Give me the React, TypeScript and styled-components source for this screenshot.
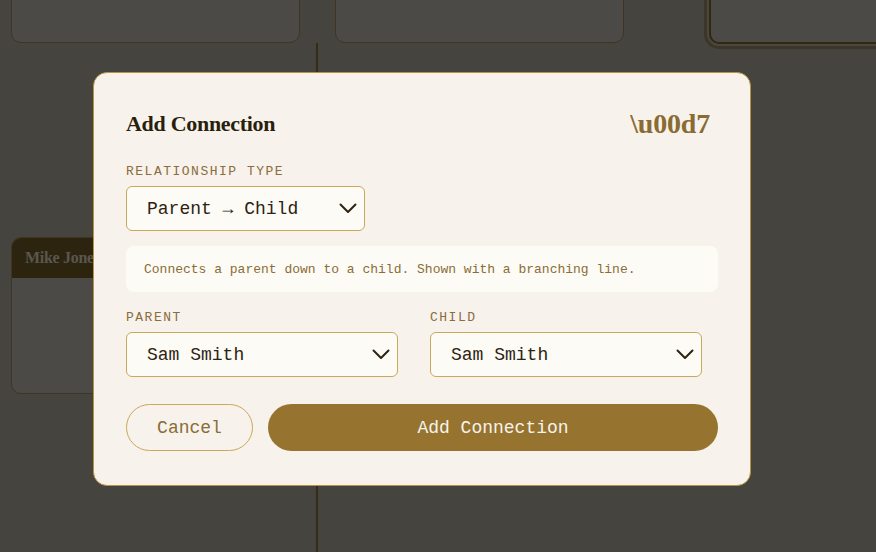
import React from "react";
import styled, { createGlobalStyle } from "styled-components";

const Global = createGlobalStyle`
  html, body { margin: 0; padding: 0; }
  body {
    width: 876px;
    height: 552px;
    overflow: hidden;
    background: #46443e;
    font-family: "Liberation Mono", "DejaVu Sans Mono", monospace;
  }
  * { box-sizing: border-box; }
`;

const Canvas = styled.div`
  position: relative;
  width: 876px;
  height: 552px;
  overflow: hidden;
  background: #46443e;
`;

const Node = styled.div<{ $selected?: boolean }>`
  position: absolute;
  background: #4b4a47;
  border: ${(p) => (p.$selected ? "2px solid #30290f" : "1px solid #3e3524")};
  border-radius: 10px;
  box-shadow: ${(p) =>
    p.$selected ? "0 0 0 2px #4a4740, 0 0 0 5px #3c3629" : "none"};
  overflow: hidden;
  display: flex;
  flex-direction: column;
`;

const NodeHeader = styled.div`
  height: 40px;
  background: #2d2410;
  display: flex;
  align-items: center;
  padding: 0 13px;
  font-family: "Liberation Serif", "DejaVu Serif", serif;
  font-weight: 700;
  font-size: 16px;
  letter-spacing: -0.3px;
  color: #5a564e;
  white-space: nowrap;
`;

const Edge = styled.div`
  position: absolute;
  width: 2px;
  background: #352b18;
`;

const Overlay = styled.div`
  position: absolute;
  inset: 0;
  display: flex;
  align-items: center;
  justify-content: center;
  padding: 6px 32px 0 0;
`;

const Modal = styled.div`
  width: 658px;
  background: #f7f2ec;
  border: 1px solid #b8933f;
  border-radius: 14px;
  padding: 36px 32px 34px 32px;
  display: flex;
  flex-direction: column;
`;

const Header = styled.div`
  display: flex;
  align-items: center;
  justify-content: space-between;
  height: 30px;
  margin-bottom: 25px;
`;

const Title = styled.h2`
  margin: 0;
  font-family: "Liberation Serif", "DejaVu Serif", serif;
  font-weight: 700;
  font-size: 22px;
  letter-spacing: -0.3px;
  color: #2a1e0c;
`;

const Close = styled.button`
  border: none;
  background: none;
  padding: 0;
  margin-right: 8px;
  font-family: "Liberation Serif", "DejaVu Serif", serif;
  font-weight: 700;
  font-size: 28px;
  letter-spacing: -0.2px;
  color: #8a6c33;
  cursor: pointer;
`;

const Label = styled.div`
  font-size: 13px;
  line-height: 16px;
  letter-spacing: 1.5px;
  color: #8a6d3b;
  text-transform: uppercase;
  margin-bottom: 6px;
`;

const SelectBox = styled.div<{ $width?: string }>`
  width: ${(p) => p.$width ?? "100%"};
  height: 45px;
  background: #fdfbf6;
  border: 1px solid #c9a85a;
  border-radius: 6px;
  display: flex;
  align-items: center;
  justify-content: space-between;
  padding: 0 7px 0 20px;
  font-size: 18px;
  color: #2e2312;
`;

const Info = styled.div`
  margin-top: 15px;
  background: #fdfbf6;
  border-radius: 8px;
  height: 46px;
  display: flex;
  align-items: center;
  padding: 0 18px;
  font-size: 13px;
  color: #8a6d35;
`;

const Grid = styled.div`
  margin-top: 18px;
  display: grid;
  grid-template-columns: 1fr 1fr;
  gap: 16px;
`;

const Field = styled.div`
  display: flex;
  flex-direction: column;
`;

const Actions = styled.div`
  margin-top: 27px;
  display: flex;
  gap: 15px;
`;

const Button = styled.button<{ $primary?: boolean }>`
  height: 47px;
  border-radius: 24px;
  font-family: "Liberation Mono", "DejaVu Sans Mono", monospace;
  font-size: 18px;
  cursor: pointer;
  flex: ${(p) => (p.$primary ? "1" : "0 0 127px")};
  background: ${(p) => (p.$primary ? "#96742f" : "transparent")};
  color: ${(p) => (p.$primary ? "#f7f2ec" : "#8a6d35")};
  border: ${(p) => (p.$primary ? "none" : "1px solid #c9a85a")};
`;

const Chevron = () => (
  <svg width="18" height="11" viewBox="0 0 18 11" fill="none">
    <polyline
      points="1.5,1.5 9,9 16.5,1.5"
      stroke="#2e2312"
      strokeWidth="2"
      strokeLinecap="round"
      strokeLinejoin="round"
    />
  </svg>
);

const Select = ({ value, width }: { value: string; width?: string }) => (
  <SelectBox $width={width}>
    <span>{value}</span>
    <Chevron />
  </SelectBox>
);

export default function App() {
  return (
    <>
      <Global />
      <Canvas>
        <Node style={{ left: 11, top: -40, width: 289, height: 83 }} />
        <Node style={{ left: 335, top: -40, width: 289, height: 83 }} />
        <Node $selected style={{ left: 709, top: -40, width: 200, height: 84 }} />
        <Edge style={{ left: 316, top: 43, height: 520 }} />
        <Node style={{ left: 11, top: 237, width: 200, height: 157 }}>
          <NodeHeader>Mike Jones</NodeHeader>
        </Node>
        <Overlay>
          <Modal>
            <Header>
              <Title>Add Connection</Title>
              <Close>{"\\u00d7"}</Close>
            </Header>
            <Label>Relationship type</Label>
            <Select value="Parent → Child" width="239px" />
            <Info>Connects a parent down to a child. Shown with a branching line.</Info>
            <Grid>
              <Field>
                <Label>Parent</Label>
                <Select value="Sam Smith" width="272px" />
              </Field>
              <Field>
                <Label>Child</Label>
                <Select value="Sam Smith" width="272px" />
              </Field>
            </Grid>
            <Actions>
              <Button>Cancel</Button>
              <Button $primary>Add Connection</Button>
            </Actions>
          </Modal>
        </Overlay>
      </Canvas>
    </>
  );
}
